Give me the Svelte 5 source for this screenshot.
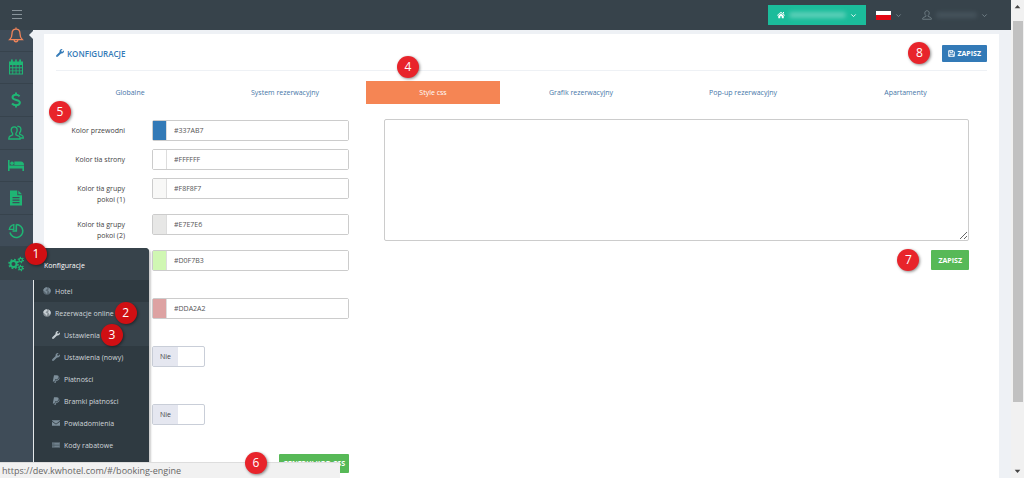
<script>
  const tabs = ['Globalne', 'System rezerwacyjny', 'Style css', 'Grafik rezerwacyjny', 'Pop-up rezerwacyjny', 'Apartamenty'];
  let activeTab = $state(2);

  const nav = ['bell', 'calendar', 'dollar', 'users', 'bed', 'file', 'pie', 'gears'];

  const colors = $state([
    { label: 'Kolor przewodni', value: '#337AB7' },
    { label: 'Kolor tła strony', value: '#FFFFFF' },
    { label: 'Kolor tła grupy pokoi (1)', value: '#F8F8F7' },
    { label: 'Kolor tła grupy pokoi (2)', value: '#E7E7E6' },
    { label: '', value: '#D0F7B3', tall: true },
    { label: '', value: '#DDA2A2', tall: true }
  ]);

  const menu = [
    { icon: 'globe', text: 'Hotel' },
    { icon: 'globe', text: 'Rezerwacje online', badge: 2, open: true },
    { icon: 'wrench', text: 'Ustawienia', badge: 3, open: true, sub: true },
    { icon: 'wrench', text: 'Ustawienia (nowy)', sub: true },
    { icon: 'paypal', text: 'Płatności', sub: true },
    { icon: 'paypal', text: 'Bramki płatności', sub: true },
    { icon: 'mail', text: 'Powiadomienia', sub: true },
    { icon: 'list', text: 'Kody rabatowe', sub: true }
  ];
  let css = $state('');
</script>

{#snippet icon(name)}
  {#if name === 'bell'}
    <svg viewBox="0 0 16 16" class="line"><path d="M1.800 12.600C3.600 11 4 9.400 4 6.800 4 4 5.600 2.200 8 2.200S12 4 12 6.800c0 2.600.4 4.200 2.200 5.800z M6.200 12.800c0 2.600 3.600 2.600 3.600 0 M8 .5v1.700" /></svg>
  {:else if name === 'calendar'}
    <svg viewBox="0 0 16 16"><path fill-rule="evenodd" d="M1 2.500h2V1q0-.8.9-.8T4.800 1v1.500h2.400V1q0-.8.8-.8t.8.8v1.500h2.400V1q0-.8.9-.8T13 1v1.500h2V15.500H1zM2 6v2.300h2.300V6zm3.200 0v2.300h2.400V6zm3.300 0v2.300h2.400V6zm3.200 0v2.300H14V6zM2 9.200v2.200h2.300V9.200zm3.200 0v2.200h2.400V9.200zm3.300 0v2.200h2.400V9.200zm3.200 0v2.200H14V9.200zM2 12.300v2.200h2.300v-2.200zm3.200 0v2.200h2.400v-2.200zm3.300 0v2.200h2.400v-2.200zm3.200 0v2.200H14v-2.200z" /></svg>
  {:else if name === 'dollar'}
    <svg viewBox="0 0 16 16" class="line thick"><path d="M11.600 4.300C10.500 3.200 9.300 2.800 8 2.800c-2 0-3.500.9-3.500 2.500C4.500 9 11.900 7 11.900 10.600c0 1.700-1.600 2.600-3.900 2.600-1.600 0-3-.6-4-1.700M8 .5v2.300M8 13.200v2.300" /></svg>
  {:else if name === 'users'}
    <svg viewBox="0 0 16 16" class="line"><path d="M6.200 1.800c2 0 3 1.400 3 3.200 0 1.600-.6 2.600-1.300 3.400v1.400l3.400 1.600q.9.500.9 2.600H.8q0-2.100.9-2.600l2.900-1.600V8.400C3.800 7.600 3.200 6.600 3.200 5c0-1.800 1-3.200 3-3.200zM9.300 1.500c2.200-.4 3.600.9 3.600 3 0 1.600-.6 2.600-1.300 3.300v1.300l2.700 1.400q1 .5 1 2.500h-2.500" /></svg>
  {:else if name === 'bed'}
    <svg viewBox="0 0 16 16"><path d="M0 3h1.600v5.600H16V14h-1.600v-2.400H1.600V14H0z" /><circle cx="4" cy="6.200" r="1.800" /><path d="M6.300 4.500h6.500Q16 4.700 16 7.900H6.300z" /></svg>
  {:else if name === 'file'}
    <svg viewBox="0 0 16 16"><path fill-rule="evenodd" d="M2 .5h7.300v4.700H14v10.300H2zM4.500 7v1.200h7V7zm0 2.600v1.200h7V9.600zm0 2.500v1.200h7v-1.200z" /><path d="M10.300.5 14 4.200h-3.700z" /></svg>
  {:else if name === 'pie'}
    <svg viewBox="0 0 16 16" class="line"><path stroke-width="1.600" d="M8.300 1.500a6.500 6.500 0 1 1-6.300 8M8.300 1.500V8H4.500" /><path d="M1.300 6.300A6 6 0 0 1 5.800 1.700v4.600z" /></svg>
  {:else if name === 'gears'}
    <svg viewBox="0 0 16 16" class="line"><circle cx="5.500" cy="8" r="3" stroke-width="2" /><circle cx="5.500" cy="8" r="4.500" stroke-width="1.600" stroke-dasharray="1.760 1.770" /><circle cx="12.800" cy="4" r="1.700" /><circle cx="12.800" cy="4" r="2.600" stroke-dasharray="1.300 1.420" /><circle cx="12.800" cy="12" r="1.700" /><circle cx="12.800" cy="12" r="2.600" stroke-dasharray="1.300 1.420" /></svg>
  {:else if name === 'globe'}
    <svg viewBox="0 0 16 16"><circle cx="8" cy="8" r="7.500" opacity=".55" /><path d="M8 .5C4 .5 1 3.500.6 7L3 9l2 1.500L6.500 14 8 11.500 9.200 9.500 7 8 5 7l1.500-2L9 3.500zM10.500 1l1 3-1.500 2.500L12 9l1 3c1.500-1.300 2.500-3 2.500-5S13 2 10.500 1z" /></svg>
  {:else if name === 'wrench'}
    <svg viewBox="0 0 512 512"><path d="M507.730 109.100c-2.240-9.030-13.540-12.090-20.120-5.510l-74.360 74.360-67.880-11.310-11.310-67.880 74.360-74.360c6.620-6.620 3.430-17.900-5.660-20.160-47.380-11.740-99.550.91-136.580 37.930-39.640 39.640-50.550 97.100-34.050 147.200L18.740 402.760c-24.990 24.990-24.990 65.510 0 90.500 24.990 24.990 65.510 24.990 90.500 0l213.210-213.210c50.120 16.710 107.470 5.680 147.370-34.220 37.070-37.070 49.700-89.320 37.910-136.730zM64 472c-13.250 0-24-10.750-24-24 0-13.260 10.750-24 24-24s24 10.750 24 24c0 13.250-10.750 24-24 24z" /></svg>
  {:else if name === 'paypal'}
    <svg viewBox="0 0 16 16"><path d="M4 .5h5.500c3 0 4.300 1.600 3.700 4.200-.6 2.700-2.500 4-5.300 4H6.300L5.300 13H1.500z" /><path d="M14.200 4.500c.8.800.9 1.900.6 3.200-.6 2.500-2.300 3.600-4.900 3.600H8.600l-.9 4.200H4.400l.3-1.500h1.500l1-4.300h1.500c3 0 5-1.700 5.500-5.200z" /></svg>
  {:else if name === 'mail'}
    <svg viewBox="0 0 16 16"><path d="M0 2.500h16v1.200L8 9.300 0 3.700zM0 5.500l8 5.600 8-5.600v8H0z" /></svg>
  {:else if name === 'list'}
    <svg viewBox="0 0 16 16"><path opacity=".45" d="M0 2h16v12H0z" /><path d="M1 4h2v1.500H1zm0 3.200h2v1.500H1zm0 3.300h2V12H1zM4.500 4H15v1.500H4.500zm0 3.200H15v1.500H4.500zm0 3.300H15V12H4.500z" /></svg>
  {:else if name === 'home'}
    <svg viewBox="0 0 16 16"><path d="M8 1.500 16 8.300l-1 1.100L8 3.500 1 9.400 0 8.300zM12 2h2v3.500l-2-1.700zM8 4.800l5.500 4.600v5.100H9.500v-4h-3v4h-4V9.400z" /></svg>
  {:else if name === 'user'}
    <svg viewBox="0 0 16 16" class="line"><path d="M8 1.200c2.300 0 3.500 1.600 3.500 3.800 0 1.700-.7 2.900-1.700 3.800v1.400l4 1.700q1.200.5 1.200 2.900H1q0-2.400 1.200-2.900l4-1.700V8.800C5.200 7.900 4.500 6.700 4.500 5c0-2.200 1.200-3.800 3.500-3.800z" /></svg>
  {:else if name === 'caret'}
    <svg viewBox="0 0 16 16" class="line thick"><path d="m3 5.500 5 5 5-5" /></svg>
  {:else if name === 'save'}
    <svg viewBox="0 0 16 16" class="line thick"><path d="M1.500 1.500h10l3 3v10h-13zM4.500 1.500v4h6v-4M4 14.500v-5h8v5" /></svg>
  {/if}
{/snippet}

<div class="shell">
  <aside>
    <button class="burger" aria-label="Menu"><i></i><i></i><i></i></button>
    <nav>
      {#each nav as name}
        <div class="nav-item" class:current={name === 'gears'}>
          <a href="#/{name}" class={name} aria-label={name}>{@render icon(name)}</a>
          {#if name === 'gears'}
            <span class="badge one">1</span>
            <div class="flyout">
              <h2>Konfiguracje</h2>
              <ul>
                {#each menu as item}
                  <li class:sub={item.sub} class:open={item.open}>
                    <a href="#/booking-engine">{@render icon(item.icon)}<span>{item.text}</span></a>
                    {#if item.badge}<span class="badge">{item.badge}</span>{/if}
                  </li>
                {/each}
              </ul>
            </div>
          {/if}
        </div>
      {/each}
    </nav>
  </aside>

  <div class="page">
    <header>
      <button class="hotel" aria-label="Hotel">{@render icon('home')}<span class="smudge"></span>{@render icon('caret')}</button>
      <button class="lang" aria-label="Polski"><span class="flag"></span>{@render icon('caret')}</button>
      <button class="account" aria-label="Konto">{@render icon('user')}<span class="smudge"></span>{@render icon('caret')}</button>
    </header>

    <main>
      <div class="title">
        <h1>{@render icon('wrench')}KONFIGURACJE</h1>
        <div class="action">
          <span class="badge">8</span>
          <button class="btn blue">{@render icon('save')}ZAPISZ</button>
        </div>
      </div>

      <div class="tabs" role="tablist">
        {#each tabs as tab, i}
          <button role="tab" aria-selected={activeTab === i} class:active={activeTab === i} onclick={() => (activeTab = i)}>
            {tab}
            {#if i === 2}<span class="badge four">4</span>{/if}
          </button>
        {/each}
      </div>

      <div class="columns">
        <form onsubmit={(e) => e.preventDefault()}>
          <span class="badge five">5</span>
          {#each colors as color, i}
            <div class="row" class:tall={color.tall}>
              <label for="color-{i}">{color.label}</label>
              <div class="color">
                <span class="swatch" style="background: {color.value}"></span>
                <input id="color-{i}" type="text" bind:value={color.value} aria-label={color.label ? undefined : 'Kolor'} />
              </div>
            </div>
          {/each}
          {#each [0, 1] as i}
            <div class="row switch-row">
              <span></span>
              <label class="switch"><input type="checkbox" /><span>Nie</span></label>
            </div>
          {/each}
          <div class="action">
            <span class="badge">6</span>
            <button class="btn green">GENERUJ KOD CSS</button>
          </div>
        </form>

        <section>
          <textarea bind:value={css} aria-label="Style css"></textarea>
          <div class="action">
            <span class="badge">7</span>
            <button class="btn green">ZAPISZ</button>
          </div>
        </section>
      </div>
    </main>
  </div>

  <div class="scrollbar" aria-hidden="true">
    <svg viewBox="0 0 10 6"><path d="M1 5.500 5 1l4 4.500z" /></svg>
    <span></span>
    <svg viewBox="0 0 10 6"><path d="m1 .5 4 4.500L9 .5z" /></svg>
  </div>

  <div class="status">https://dev.kwhotel.com/#/booking-engine</div>
</div>

<style>
  :global(body) { overflow: hidden; }
  .shell, .shell :global(*) { box-sizing: border-box; }
  .shell {
    display: flex;
    position: relative;
    height: 100vh;
    overflow: hidden;
    background: #eef1f5;
    font: 7px/11px "Open Sans", "Noto Sans", sans-serif;
    color: #444;
  }
  button { border: 0; padding: 0; background: none; font: inherit; color: inherit; cursor: pointer; }
  a { color: inherit; text-decoration: none; }
  h1, h2, ul { margin: 0; padding: 0; list-style: none; }
  svg { display: block; flex: none; width: 8px; height: 8px; fill: currentColor; }
  svg.line { fill: none; stroke: currentColor; stroke-width: 1.3; }
  svg.thick { stroke-width: 2; }

  .badge {
    display: grid;
    place-items: center;
    flex: none;
    width: 22px;
    height: 22px;
    border-radius: 50%;
    background: #e8242b;
    box-shadow: 1px 1px 3px rgba(0, 0, 0, .45);
    color: #fff;
    font-size: 12px;
    line-height: 22px;
  }

  aside {
    position: relative;
    z-index: 2;
    flex: none;
    width: 33px;
    background: linear-gradient(#37434b 30px, #3f4c58 30px);
  }
  .burger {
    display: flex;
    flex-direction: column;
    align-items: center;
    justify-content: flex-end;
    gap: 3px;
    width: 100%;
    height: 19px;
  }
  .burger i { width: 10px; height: 1px; background: #89949b; }
  nav { display: grid; grid-auto-rows: 1fr; height: 261px; }
  .nav-item { position: relative; border-bottom: 1px solid #37434d; color: #1fb574; }
  .nav-item:last-child { border-bottom: 0; }
  .nav-item a { display: grid; place-items: center; height: 100%; }
  .nav-item > a { padding-right: 2px; }
  .nav-item > a svg { width: 16px; height: 16px; }
  .nav-item > .bell { color: #f0845a; }
  .bell::after {
    content: "";
    position: absolute;
    right: 0;
    top: 12px;
    border: 4px solid transparent;
    border-left: 0;
    border-right-color: #eef1f5;
  }
  .current { background: #37434b; }
  .badge.one { position: absolute; top: -4px; left: 25px; z-index: 2; }

  .flyout {
    position: absolute;
    left: 33px;
    top: 1px;
    width: 116px;
    border-radius: 0 4px 0 0;
    background: #2f3a41;
    box-shadow: 2px 2px 2px rgba(0, 0, 0, .2);
    color: #cfd6da;
  }
  .current .badge { background: #d00f13; }
  .flyout h2 {
    height: 32px;
    padding-left: 11px;
    border-radius: 0 4px 0 0;
    background: #37434b;
    color: #fff;
    font-size: 7px;
    font-weight: 400;
    line-height: 35px;
  }
  .flyout ul { height: 210px; border-left: 1px solid #e4e8ea; }
  .flyout li { display: flex; align-items: center; gap: 1px; height: 22px; padding-left: 9px; }
  .flyout li.sub { padding-left: 18px; }
  .flyout li.open { background: #37434b; }
  .flyout li a { display: flex; align-items: center; gap: 4px; }
  .flyout li svg { color: #7d8e9a; }
  .flyout li.open svg { color: #c8d0d5; }

  .page { flex: 1; min-width: 0; }
  header {
    display: flex;
    justify-content: flex-end;
    align-items: center;
    height: 30px;
    padding-right: 23px;
    background: #37434b;
    color: #78868e;
  }
  header button { display: flex; align-items: center; }
  .hotel {
    gap: 4px;
    width: 98px;
    height: 20px;
    padding: 0 9px;
    background: #1bbc9b;
    color: #fff;
  }
  .smudge { flex: 1; height: 6px; border-radius: 3px; background: #86dcca; filter: blur(2px); opacity: .6; }
  .lang { gap: 4px; margin-left: 10px; }
  .flag { width: 15px; height: 9px; background: linear-gradient(#fff 50%, #e20613 50%); }
  .account { gap: 4px; width: 66px; margin-left: 20px; }
  .account > svg:first-child { width: 10px; height: 10px; }
  .account .smudge { background: #4f5d66; }
  header svg.thick { width: 7px; height: 7px; }

  main { min-height: calc(100vh - 34px); margin: 4px 12px 0 11px; padding: 0 12px; background: #fff; }
  .title {
    display: flex;
    justify-content: space-between;
    align-items: center;
    height: 37px;
    padding-top: 2px;
    border-bottom: 1px solid #eef1f5;
  }
  h1 { display: flex; align-items: center; gap: 3px; color: #337ab7; font-size: 8px; font-weight: 600; }
  .action { display: flex; justify-content: flex-end; align-items: center; gap: 12px; }
  .btn {
    display: flex;
    align-items: center;
    justify-content: center;
    gap: 2px;
    height: 19px;
    padding: 0 6px;
    border-radius: 1px;
    color: #fff;
    font-weight: 700;
    white-space: nowrap;
  }
  .btn svg { width: 7px; height: 7px; }
  .blue { height: 17px; background: #337ab7; }
  .green { background: #57b957; }

  .tabs {
    display: grid;
    grid-template-columns: 148fr 162fr 134fr 162fr 162fr 163fr;
    padding: 10px 0;
    color: #4676a8;
  }
  .tabs button { position: relative; height: 23px; }
  .tabs .active { background: #f58554; color: #fff; }
  .badge.four { position: absolute; left: 31px; top: -25px; }

  .columns { display: grid; grid-template-columns: 310fr 621fr; padding-top: 5px; }
  form { position: relative; padding: 1px 17px 0 9px; }
  .badge.five { position: absolute; left: -7px; top: -18px; }
  .row { display: flex; gap: 27px; min-height: 29px; }
  .row > :first-child { flex: none; width: 60px; padding-top: 5px; text-align: right; }
  .row:nth-of-type(3), .row:nth-of-type(4) { min-height: 36px; }
  .row.tall { min-height: 48px; }
  .color { display: flex; flex: 1; height: 21px; min-width: 0; border: 1px solid #ccc; border-radius: 2px; }
  .swatch { flex: none; width: 14px; border-right: 1px solid #ddd; }
  .color input {
    flex: 1;
    min-width: 0;
    border: 0;
    padding: 0 7px;
    background: #fff;
    color: #555;
    font: inherit;
    outline: 0;
  }
  .switch-row { min-height: 58px; }
  .switch-row + .switch-row { min-height: 48px; }
  .switch { width: 53px; height: 21px; border: 1px solid #c9ced8; border-radius: 2px; }
  .switch input { position: absolute; opacity: 0; }
  .switch span { display: block; width: 25px; height: 19px; background: #e5e7f0; line-height: 19px; text-align: center; }

  section { padding: 0 18px; }
  textarea {
    display: block;
    width: 100%;
    height: 122px;
    margin-bottom: 8px;
    border: 1px solid #ccc;
    border-radius: 2px;
    font: inherit;
  }
  section .btn { height: 20px; padding: 0 7px; }

  .scrollbar {
    display: flex;
    flex-direction: column;
    align-items: center;
    flex: none;
    width: 13px;
    padding: 4px 0;
    background: #f1f1f1;
    color: #444;
  }
  .scrollbar svg { width: 7px; height: 5px; }
  .scrollbar span { flex: 0 0 81%; width: 10px; margin: 12px 0 auto; background: #c1c1c1; }

  .status {
    position: absolute;
    left: 0;
    bottom: 0;
    z-index: 3;
    width: 340px;
    height: 16px;
    padding-left: 2px;
    border-top: 1px solid #ddd;
    background: #f1f1f1;
    color: #666;
    font-size: 9px;
    line-height: 15px;
  }
  form .action .badge { position: relative; z-index: 4; }
  form .btn { padding: 0 4px; }
</style>
